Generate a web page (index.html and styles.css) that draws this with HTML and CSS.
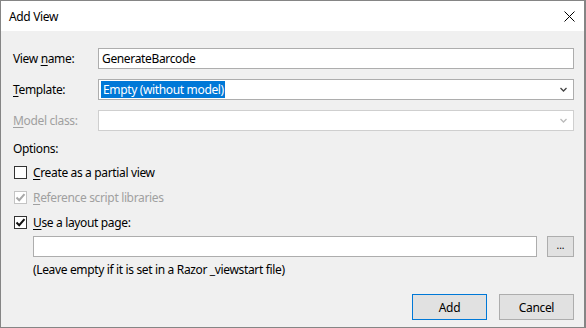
FILE: index.html
```html
<!DOCTYPE html>
<html>
<head>
<meta charset="utf-8">
<link rel="stylesheet" href="styles.css">
</head>
<body>
<div class="window">
  <div class="titlebar">
    <span class="title">Add View</span>
    <svg class="close" width="11" height="11" viewBox="0 0 11 11"><path d="M0.5 0.5 L10.5 10.5 M10.5 0.5 L0.5 10.5" stroke="#000" stroke-width="1" fill="none"/></svg>
  </div>
  <div class="content">
    <div class="field">
      <span class="label">View <u>n</u>ame:</span>
      <div class="textbox"><span>GenerateBarcode</span></div>
    </div>
    <div class="field">
      <span class="label"><u>T</u>emplate:</span>
      <div class="textbox select">
        <span class="selected">Empty (without model)</span>
        <svg class="chev" width="7" height="5" viewBox="0 0 7 5"><path d="M0.5 1 L3.5 4 L6.5 1" stroke="#444" stroke-width="1.3" fill="none"/></svg>
      </div>
    </div>
    <div class="field">
      <span class="label disabled"><u>M</u>odel class:</span>
      <div class="textbox select disabled-box">
        <span></span>
        <svg class="chev" width="7" height="5" viewBox="0 0 7 5"><path d="M0.5 1 L3.5 4 L6.5 1" stroke="#bbb" stroke-width="1.3" fill="none"/></svg>
      </div>
    </div>
    <div class="options-label">Options:</div>
    <div class="check-row">
      <span class="check"></span>
      <span><u>C</u>reate as a partial view</span>
    </div>
    <div class="check-row disabled">
      <span class="check check-disabled"><svg width="11" height="11" viewBox="0 0 11 11"><path d="M1.5 5.5 L4.2 8.2 L9.5 2.2" stroke="#a8a8a8" stroke-width="2" fill="none"/></svg></span>
      <span><u>R</u>eference script libraries</span>
    </div>
    <div class="check-row">
      <span class="check"><svg width="11" height="11" viewBox="0 0 11 11"><path d="M1.5 5.5 L4.2 8.2 L9.5 2.2" stroke="#111" stroke-width="2" fill="none"/></svg></span>
      <span><u>U</u>se a layout page:</span>
    </div>
    <div class="layout-row">
      <div class="textbox layout-box"></div>
      <div class="btn browse">...</div>
    </div>
    <div class="hint">(Leave empty if it is set in a Razor _viewstart file)</div>
    <div class="buttons">
      <div class="btn default">Add</div>
      <div class="btn">Cancel</div>
    </div>
  </div>
</div>
</body>
</html>
```
FILE: styles.css
```css
* { box-sizing: border-box; }
html, body { margin: 0; padding: 0; background: #f0f0f0; }
body {
  font-family: "Noto Sans", "Open Sans", sans-serif;
  font-size: 12px;
  letter-spacing: -0.35px;
  color: #000;
}
.window {
  width: 586px;
  height: 328px;
  border: 1px solid #858585;
  border-right-width: 2px;
  background: #f0f0f0;
  display: flex;
  flex-direction: column;
}
.titlebar {
  height: 30px;
  background: #fff;
  display: flex;
  align-items: center;
  justify-content: space-between;
  padding: 0 9px 0 8px;
  flex-shrink: 0;
}
.title { font-size: 12px; }
.close { display: block; }
.content {
  padding: 17px 10px 0 12px;
  display: flex;
  flex-direction: column;
}
.field {
  display: flex;
  align-items: center;
  height: 21px;
  margin-bottom: 10px;
}
.label { width: 85px; flex-shrink: 0; }
.label u, .check-row u { text-decoration-thickness: 1px; text-underline-offset: 2px; }
.disabled { color: #a0a0a0; }
.textbox {
  flex: 1;
  height: 21px;
  background: #fff;
  border: 1px solid #adadad;
  display: flex;
  align-items: center;
  padding: 0 6px 0 3px;
  line-height: 16px;
}
.select { justify-content: space-between; padding-left: 2px; }
.selected { background: #0078d7; color: #fff; padding: 0 1px 0 2px; line-height: 17px; }
.disabled-box { border-color: #cfcfcf; }
.chev { display: block; }
.options-label { height: 16px; line-height: 16px; margin-bottom: 3px; }
.check-row {
  display: flex;
  align-items: center;
  height: 25px;
}
.check {
  width: 13px;
  height: 13px;
  border: 1px solid #333;
  background: #fff;
  margin-left: 1px;
  margin-right: 6px;
  display: flex;
  align-items: center;
  justify-content: center;
  flex-shrink: 0;
}
.check svg { display: block; }
.check-disabled { border-color: #c4c4c4; background: #fff; }
.layout-row {
  display: flex;
  align-items: center;
  margin-left: 20px;
  margin-top: 1px;
  gap: 10px;
}
.layout-box { flex: 1; }
.btn {
  background: #e1e1e1;
  border: 1px solid #adadad;
  display: flex;
  align-items: center;
  justify-content: center;
  height: 26px;
  width: 75px;
}
.browse { width: 27px; height: 21px; font-size: 10px; line-height: 10px; padding-bottom: 3px; letter-spacing: 0; }
.hint { margin-left: 20px; margin-top: 5px; height: 16px; line-height: 16px; }
.buttons {
  display: flex;
  justify-content: flex-end;
  gap: 12px;
  margin-top: 16px;
}
.default { border-color: #0078d7; }
```
